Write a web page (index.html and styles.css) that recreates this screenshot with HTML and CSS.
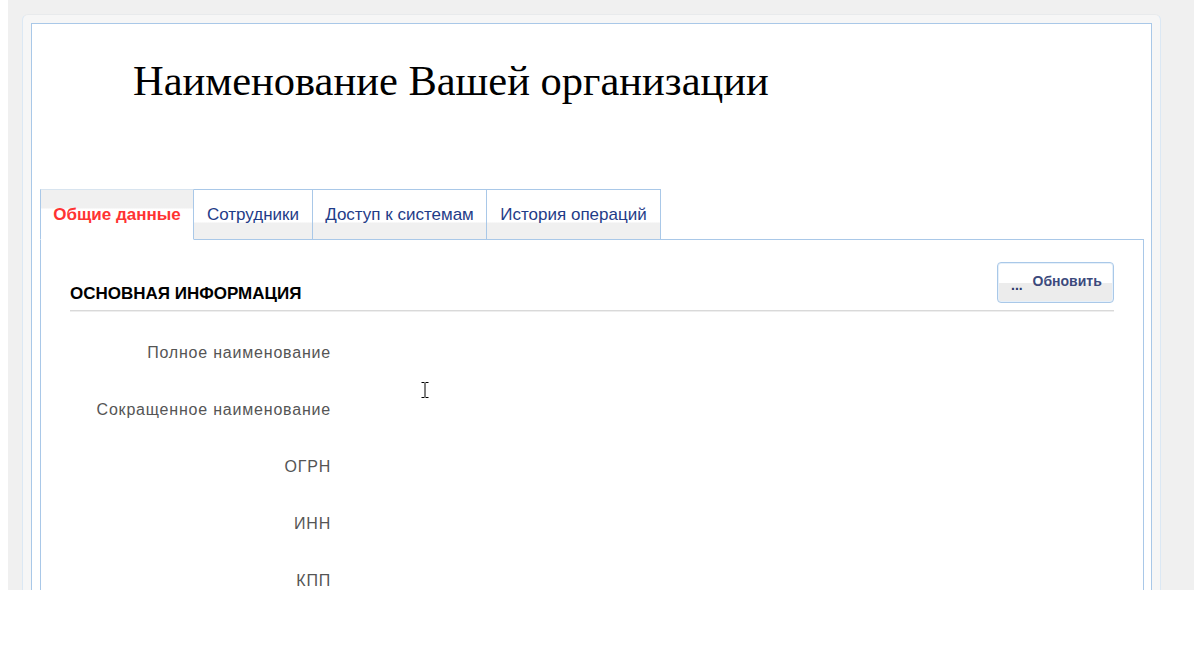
FILE: index.html
```html
<!DOCTYPE html>
<html lang="ru">
<head>
<meta charset="utf-8">
<title>Наименование Вашей организации</title>
<link rel="stylesheet" href="styles.css">
</head>
<body>
<div class="desk">
  <div class="frame">
    <div class="panel">
      <h1 class="org-title">Наименование Вашей организации</h1>
      <div class="tabs">
        <div class="tab tab-active tab-w1">Общие данные</div>
        <div class="tab tab-w2">Сотрудники</div>
        <div class="tab tab-w3">Доступ к системам</div>
        <div class="tab tab-w4">История операций</div>
      </div>
      <div class="tab-body">
        <div class="section-head">
          <h2 class="section-title">ОСНОВНАЯ ИНФОРМАЦИЯ</h2>
          <button class="btn-refresh"><span class="dots">...</span> Обновить</button>
        </div>
        <div class="fields">
          <div class="field"><span class="label">Полное наименование</span><span class="value"></span></div>
          <div class="field"><span class="label">Сокращенное наименование</span><span class="value"></span></div>
          <div class="field"><span class="label">ОГРН</span><span class="value"></span></div>
          <div class="field"><span class="label">ИНН</span><span class="value"></span></div>
          <div class="field"><span class="label">КПП</span><span class="value"></span></div>
        </div>
        <svg class="ibeam" width="8" height="16" viewBox="0 0 8 16"><path d="M0.5 0.5h3M4.5 0.5h3M4 1v14M0.5 15.5h3M4.5 15.5h3" stroke="#000" stroke-width="1" fill="none"/></svg>
      </div>
    </div>
  </div>
</div>
</body>
</html>
```
FILE: styles.css
```css
html, body {
  margin: 0;
  padding: 0;
  background: #ffffff;
}
body {
  padding-left: 8px;
  font-family: "Liberation Sans", Arial, sans-serif;
}
.desk {
  background: #f0f0f0;
  height: 590px;
  overflow: hidden;
  padding: 14px 0 0 14px;
  box-sizing: border-box;
}
.frame {
  width: 1139px;
  height: 700px;
  box-sizing: border-box;
  background: #f6f6f6;
  border: 1px solid #dbe8f4;
  border-top-color: #e8eaec;
  border-radius: 6px 6px 0 0;
  padding: 8px 8px 0 8px;
}
.panel {
  background: #ffffff;
  border: 1px solid #a9c8e8;
  height: 700px;
  box-sizing: border-box;
  padding: 0 8px;
}
.org-title {
  margin: 0;
  padding: 34px 0 0 93px;
  height: 165px;
  box-sizing: border-box;
  font-family: "Liberation Serif", "Times New Roman", serif;
  font-weight: normal;
  font-size: 42.5px;
  line-height: 46px;
  color: #000;
}
.tabs {
  display: flex;
  height: 51px;
  box-sizing: border-box;
  position: relative;
  z-index: 1;
  margin-bottom: -1px;
}
.tab {
  box-sizing: border-box;
  height: 51px;
  border: 1px solid #a9c8e8;
  border-left: none;
  background: linear-gradient(#ffffff 0, #ffffff 32px, #f0f0f0 33px, #f0f0f0 100%);
  color: #1f3c88;
  font-size: 17px;
  padding-top: 14px;
  line-height: 21px;
  text-align: center;
  white-space: nowrap;
}
.tab:first-child {
  border-left: 1px solid #a9c8e8;
}
.tab-w1 { width: 154px; }
.tab-w2 { width: 119px; }
.tab-w3 { width: 174px; }
.tab-w4 { width: 174px; }
.tab-active {
  border-top-color: #d8e4ef;
  border-bottom: 1px solid #ffffff;
  background: linear-gradient(#f0f0f0 0, #f0f0f0 18px, #ffffff 19px, #ffffff 100%);
  color: #ff3333;
  font-weight: bold;
}
.tab-body {
  position: relative;
  border: 1px solid #a9c8e8;
  width: 1104px;
  height: 400px;
  box-sizing: border-box;
  padding: 22px 29px 0 29px;
  background: #fff;
}
.section-head {
  display: flex;
  align-items: flex-start;
  justify-content: space-between;
  border-bottom: 1px solid #d9d9d9;
  box-shadow: 0 1px 0 #eeeeee;
  height: 49px;
  box-sizing: border-box;
}
.section-title {
  margin: 22px 0 0 0;
  font-size: 17px;
  font-weight: bold;
  line-height: 20px;
  color: #000;
}
.btn-refresh {
  width: 117px;
  height: 41px;
  box-sizing: border-box;
  border: 1px solid #a9c8e8;
  border-radius: 4px;
  background: linear-gradient(#ffffff 0, #ffffff 50%, #ececec 52%, #ececec 100%);
  box-shadow: inset 0 0 0 1px #e6f0fa;
  font-family: "Liberation Sans", Arial, sans-serif;
  font-size: 14px;
  font-weight: bold;
  color: #3c4a7c;
  padding: 0 0 4px 13px;
  text-align: left;
  cursor: pointer;
}
.btn-refresh .dots {
  position: relative;
  top: 4px;
  color: #2a3a6a;
  margin-right: 6px;
}
.fields {
  display: flex;
  flex-direction: column;
  padding-top: 32px;
}
.field {
  display: flex;
  height: 57px;
}
.label {
  width: 261px;
  text-align: right;
  font-size: 16px;
  letter-spacing: 0.8px;
  line-height: 20px;
  color: #555555;
}
.value {
  flex: 1;
}
.ibeam {
  position: absolute;
  left: 380px;
  top: 142px;
}
```
